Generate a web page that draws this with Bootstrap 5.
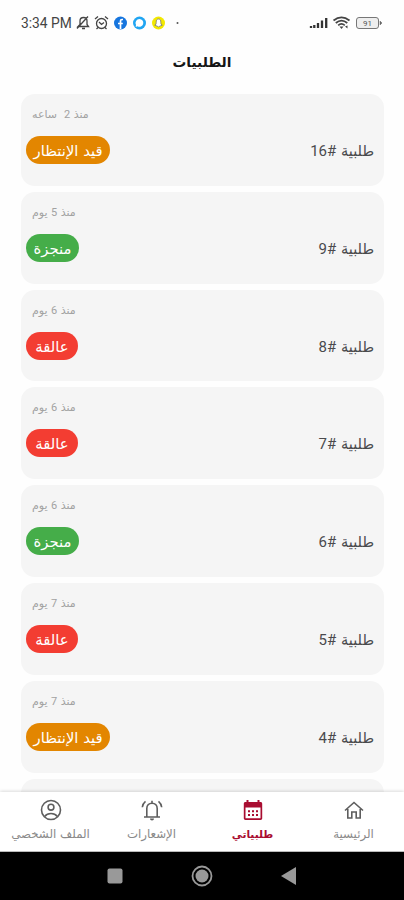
<!DOCTYPE html>
<html lang="ar" dir="rtl">
<head>
<meta charset="utf-8">
<meta name="viewport" content="width=device-width, initial-scale=1">
<title>الطلبيات</title>
<link href="https://cdn.jsdelivr.net/npm/bootstrap@5.3.0/dist/css/bootstrap.min.css" rel="stylesheet">
<style>
body{font-family:"DejaVu Sans","DejaVu Sans Condensed",sans-serif;height:900px;background:#fefefe;color:#4a4a4d}
.screen{height:900px}
.status{height:46px;padding:0 21px;color:#444}
.clock{font-family:Roboto,sans-serif;font-size:13.8px;width:53px;white-space:nowrap}
.page-title{height:48px;padding-top:6px;font-size:13.7px;line-height:20px;color:#151515;font-weight:700}
.orders{min-height:0;padding:0 20px 0 21px;gap:6px}
.order{height:91.8px;flex:none;background:#f5f5f5;border-radius:14px;padding:12px 10px 0 5px}
.ago{font-size:11px;line-height:17px;height:16px;color:#a2a2a2;padding-left:6px}
.order bdi bdi,.num{font-family:Roboto,sans-serif}
.order-line{margin-top:14px}
.order-name{font-size:14.6px;line-height:28px;height:28px;padding-top:1px;white-space:nowrap}
.num{font-size:15px}
.state{height:28px;border-radius:14px;color:#fff;font-size:14.8px;line-height:29px;white-space:nowrap}
.wait{background:#e38600;width:84px}
.done{background:#45ad49;width:53px}
.held{background:#f33d32;width:52px}
.tabs{height:60px;background:#fff;box-shadow:0 -1px 3px #0002;z-index:1;border-bottom:1px solid #bbb}
.tab{width:101px;color:#8a8a8a;font-size:11.8px;line-height:17px;padding-top:7px;gap:5px;white-space:nowrap}
.tab svg{color:#5e5e5e}
.tab.on,.tab.on svg{color:#a90d31}
.tab.on{font-weight:700;font-size:10.6px}
.sysbar{height:48px;background:#000;padding:0 107px}
</style>
<script src="https://cdn.jsdelivr.net/npm/bootstrap@5.3.0/dist/js/bootstrap.bundle.min.js"></script>
</head>
<body class="overflow-hidden">
<div class="screen d-flex flex-column overflow-hidden">
<header class="status d-flex flex-shrink-0 align-items-center justify-content-between" dir="ltr">
  <div class="d-flex align-items-center">
    <span class="clock">3:34 PM</span>
    <svg width="108" height="16" viewBox="74 15 108 16" fill="none" stroke="#444" stroke-width="1.3">
      <path d="M78 26.500h10.500l-1.500-2v-3.500c0-2-1.500-3.500-3.500-3.500s-3.500 1.500-3.500 3.500v3.500zM82 28.500h3M77 28.500l11-12"/>
      <circle cx="101.500" cy="23.500" r="5"/><path d="M99 22l2.500 2.500 2.500-2M95 19l3-2.500M105 16.500l3 2.500M98 27.500l-1.500 1.500M105 27.500l1.500 1.500"/>
      <circle cx="120.500" cy="23" r="6.500" fill="#1675de" stroke="none"/><path d="M123 19.500h-1c-1 0-1.500.5-1.500 1.500v8M118 23.500h4.800" stroke="#fff" stroke-width="1.700"/>
      <circle cx="139.500" cy="23" r="6.500" fill="#20a5f2" stroke="none"/><path d="M139.500 19a3.900 3.900 0 1 1-2 7.300l-1.800.7.300-2.200a3.900 3.900 0 0 1 3.500-5.800z" fill="#fff" stroke="none"/>
      <circle cx="158.500" cy="23" r="6.500" fill="#f3e900" stroke="none"/><path d="M158.500 19c-1.600 0-2.400 1.200-2.300 3.200l-.2 2-1.300 1 2 .7 1.800 1 1.800-1 2-.7-1.300-1-.2-2c.1-2-.7-3.200-2.300-3.200z" fill="#fff" stroke="#777" stroke-width=".8"/>
      <circle cx="177.500" cy="23" r="1" fill="#555" stroke="none"/>
    </svg>
  </div>
  <svg width="74" height="16" viewBox="309 15 74 16" fill="none" stroke="#333">
    <path d="M311 28v-2M314.300 28v-3M318 28v-5M322 28v-7.500M326.200 28v-10" stroke-width="2.300"/>
    <path d="M333.500 20.500c5-4 11-4 16 0M335.800 23c3.500-3 8-3 11.500 0M338.200 25.300c2-1.800 4.500-1.800 6.600 0" stroke-width="1.700" stroke="#444"/><path d="M339.500 26.500h4L341.500 29zM345 26.500l2.500-1v3" fill="#444" stroke="none"/>
    <rect x="356.500" y="17.500" width="22" height="11" rx="2.500" stroke="#777" fill="#eee"/><path d="M380 21v4l2-2z" fill="#666" stroke="#666" stroke-width=".5"/>
    <text x="367.500" y="26" font-size="8" text-anchor="middle" fill="#555" stroke="none" font-family="Roboto">91</text>
  </svg>
</header>
<h1 class="page-title text-center flex-shrink-0 m-0">الطلبيات</h1>
<main class="orders d-flex flex-column flex-grow-1 overflow-hidden">
  <article class="order"><div class="ago" dir="ltr"><bdi dir="rtl">منذ <bdi>2</bdi> &nbsp;ساعه</bdi></div><div class="order-line d-flex justify-content-between"><div class="order-name">طلبية <bdi class="num" dir="rtl">#<bdi>16</bdi></bdi></div><div class="state wait text-center">قيد الإنتظار</div></div></article>
  <article class="order"><div class="ago" dir="ltr"><bdi dir="rtl">منذ <bdi>5</bdi> يوم</bdi></div><div class="order-line d-flex justify-content-between"><div class="order-name">طلبية <bdi class="num" dir="rtl">#<bdi>9</bdi></bdi></div><div class="state done text-center">منجزة</div></div></article>
  <article class="order"><div class="ago" dir="ltr"><bdi dir="rtl">منذ <bdi>6</bdi> يوم</bdi></div><div class="order-line d-flex justify-content-between"><div class="order-name">طلبية <bdi class="num" dir="rtl">#<bdi>8</bdi></bdi></div><div class="state held text-center">عالقة</div></div></article>
  <article class="order"><div class="ago" dir="ltr"><bdi dir="rtl">منذ <bdi>6</bdi> يوم</bdi></div><div class="order-line d-flex justify-content-between"><div class="order-name">طلبية <bdi class="num" dir="rtl">#<bdi>7</bdi></bdi></div><div class="state held text-center">عالقة</div></div></article>
  <article class="order"><div class="ago" dir="ltr"><bdi dir="rtl">منذ <bdi>6</bdi> يوم</bdi></div><div class="order-line d-flex justify-content-between"><div class="order-name">طلبية <bdi class="num" dir="rtl">#<bdi>6</bdi></bdi></div><div class="state done text-center">منجزة</div></div></article>
  <article class="order"><div class="ago" dir="ltr"><bdi dir="rtl">منذ <bdi>7</bdi> يوم</bdi></div><div class="order-line d-flex justify-content-between"><div class="order-name">طلبية <bdi class="num" dir="rtl">#<bdi>5</bdi></bdi></div><div class="state held text-center">عالقة</div></div></article>
  <article class="order"><div class="ago" dir="ltr"><bdi dir="rtl">منذ <bdi>7</bdi> يوم</bdi></div><div class="order-line d-flex justify-content-between"><div class="order-name">طلبية <bdi class="num" dir="rtl">#<bdi>4</bdi></bdi></div><div class="state wait text-center">قيد الإنتظار</div></div></article>
  <article class="order"></article>
</main>
<nav class="tabs d-flex flex-shrink-0">
  <div class="tab d-flex flex-column align-items-center">
    <svg width="22" height="22" viewBox="0 0 22 22" fill="none" stroke="currentColor" stroke-width="1.600"><path d="M2 11.500L11 3.500l9 8M4.800 10v9h4v-6h4.400v6h4v-9"/></svg><span>الرئيسية</span></div>
  <div class="tab on d-flex flex-column align-items-center">
    <svg width="22" height="22" viewBox="0 0 22 22"><path fill="currentColor" fill-rule="evenodd" d="M4.500 1h2v2h9V1h2v2h1c1 0 1.700.7 1.700 1.700v14.600c0 1-.7 1.700-1.700 1.700h-15c-1 0-1.700-.7-1.700-1.700V4.700C1.800 3.700 2.500 3 3.500 3h1zM3.500 8.500v10.800h15V8.500z"/><path d="M6 12.200h2m2 0h2m2 0h2M6 16h2m2 0h2m2 0h2" stroke="currentColor" stroke-width="2"/></svg><span>طلبياتي</span></div>
  <div class="tab d-flex flex-column align-items-center">
    <svg width="22" height="22" viewBox="0 0 22 22" fill="none" stroke="currentColor" stroke-width="1.600"><path d="M3 18h16M5.800 18V9.500c0-3.200 2.200-5.300 5.200-5.300s5.200 2.100 5.200 5.300V18M11 4V1.800M4.500 2.300C2.600 3.800 1.500 5.800 1.300 8.300M17.500 2.300c1.900 1.500 3 3.500 3.200 6"/><path d="M9 19.500h4c0 1.200-.8 2-2 2s-2-.8-2-2z" fill="currentColor" stroke="none"/></svg><span>الإشعارات</span></div>
  <div class="tab d-flex flex-column align-items-center">
    <svg width="22" height="22" viewBox="0 0 22 22" fill="none" stroke="currentColor" stroke-width="1.600"><circle cx="11" cy="11" r="9.500"/><circle cx="11" cy="8.200" r="2.900"/><path d="M4.600 17.500c1.600-2 4-3 6.400-3s4.800 1 6.400 3"/></svg><span>الملف الشخصي</span></div>
</nav>
<footer class="sysbar d-flex flex-shrink-0 align-items-center justify-content-between" dir="ltr">
  <svg width="16" height="16"><rect x=".5" y=".5" width="15" height="15" rx="2" fill="#999"/></svg>
  <svg width="22" height="22" fill="none" stroke="#999"><circle cx="11" cy="11" r="9.500" stroke-width="1.800"/><circle cx="11" cy="11" r="6.500" fill="#999" stroke="none"/></svg>
  <svg width="16" height="18"><path d="M0 9L15 0v18z" fill="#999"/></svg>
</footer>
</div>
</body>
</html>
